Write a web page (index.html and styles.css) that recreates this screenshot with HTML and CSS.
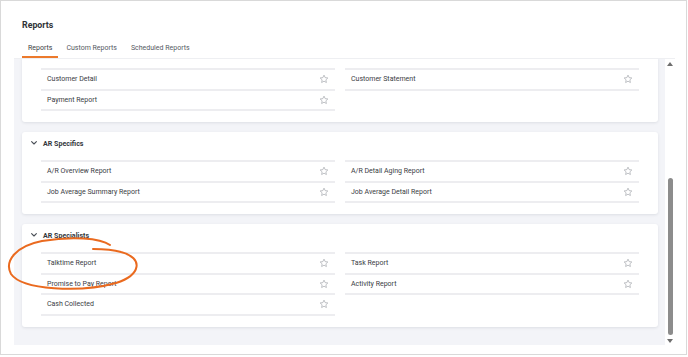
FILE: index.html
```html
<!DOCTYPE html>
<html lang="en">
<head>
<meta charset="utf-8">
<title>Reports</title>
<link rel="stylesheet" href="styles.css">
</head>
<body>
<div class="frame">
  <h1 class="title">Reports</h1>
  <nav class="tabs">
    <a class="tab active">Reports</a>
    <a class="tab">Custom Reports</a>
    <a class="tab">Scheduled Reports</a>
  </nav>
  <div class="viewport">
    <div class="pane">
      <div class="cards scrolled">
        <section class="card cut">
          <div class="list">
            <div class="col">
              <div class="row"><span>Customer Detail</span><svg class="star" viewBox="0 0 24 24"><path d="M12 2.8l2.8 5.9 6.4.8-4.7 4.5 1.2 6.4L12 17.3l-5.7 3.1 1.2-6.4L2.8 9.5l6.4-.8z"/></svg></div>
              <div class="row"><span>Payment Report</span><svg class="star" viewBox="0 0 24 24"><path d="M12 2.8l2.8 5.9 6.4.8-4.7 4.5 1.2 6.4L12 17.3l-5.7 3.1 1.2-6.4L2.8 9.5l6.4-.8z"/></svg></div>
            </div>
            <div class="col">
              <div class="row"><span>Customer Statement</span><svg class="star" viewBox="0 0 24 24"><path d="M12 2.8l2.8 5.9 6.4.8-4.7 4.5 1.2 6.4L12 17.3l-5.7 3.1 1.2-6.4L2.8 9.5l6.4-.8z"/></svg></div>
            </div>
          </div>
        </section>
        <section class="card">
          <header class="card-head">
            <svg class="chev" viewBox="0 0 6 4"><polyline points="0.6,0.6 3,3 5.4,0.6"/></svg>
            <span>AR Specifics</span>
          </header>
          <div class="list">
            <div class="col">
              <div class="row"><span>A/R Overview Report</span><svg class="star" viewBox="0 0 24 24"><path d="M12 2.8l2.8 5.9 6.4.8-4.7 4.5 1.2 6.4L12 17.3l-5.7 3.1 1.2-6.4L2.8 9.5l6.4-.8z"/></svg></div>
              <div class="row"><span>Job Average Summary Report</span><svg class="star" viewBox="0 0 24 24"><path d="M12 2.8l2.8 5.9 6.4.8-4.7 4.5 1.2 6.4L12 17.3l-5.7 3.1 1.2-6.4L2.8 9.5l6.4-.8z"/></svg></div>
            </div>
            <div class="col">
              <div class="row"><span>A/R Detail Aging Report</span><svg class="star" viewBox="0 0 24 24"><path d="M12 2.8l2.8 5.9 6.4.8-4.7 4.5 1.2 6.4L12 17.3l-5.7 3.1 1.2-6.4L2.8 9.5l6.4-.8z"/></svg></div>
              <div class="row"><span>Job Average Detail Report</span><svg class="star" viewBox="0 0 24 24"><path d="M12 2.8l2.8 5.9 6.4.8-4.7 4.5 1.2 6.4L12 17.3l-5.7 3.1 1.2-6.4L2.8 9.5l6.4-.8z"/></svg></div>
            </div>
          </div>
        </section>
        <section class="card">
          <header class="card-head">
            <svg class="chev" viewBox="0 0 6 4"><polyline points="0.6,0.6 3,3 5.4,0.6"/></svg>
            <span>AR Specialists</span>
          </header>
          <div class="list">
            <div class="col">
              <div class="row"><span>Talktime Report</span><svg class="star" viewBox="0 0 24 24"><path d="M12 2.8l2.8 5.9 6.4.8-4.7 4.5 1.2 6.4L12 17.3l-5.7 3.1 1.2-6.4L2.8 9.5l6.4-.8z"/></svg></div>
              <div class="row"><span>Promise to Pay Report</span><svg class="star" viewBox="0 0 24 24"><path d="M12 2.8l2.8 5.9 6.4.8-4.7 4.5 1.2 6.4L12 17.3l-5.7 3.1 1.2-6.4L2.8 9.5l6.4-.8z"/></svg></div>
              <div class="row"><span>Cash Collected</span><svg class="star" viewBox="0 0 24 24"><path d="M12 2.8l2.8 5.9 6.4.8-4.7 4.5 1.2 6.4L12 17.3l-5.7 3.1 1.2-6.4L2.8 9.5l6.4-.8z"/></svg></div>
            </div>
            <div class="col">
              <div class="row"><span>Task Report</span><svg class="star" viewBox="0 0 24 24"><path d="M12 2.8l2.8 5.9 6.4.8-4.7 4.5 1.2 6.4L12 17.3l-5.7 3.1 1.2-6.4L2.8 9.5l6.4-.8z"/></svg></div>
              <div class="row"><span>Activity Report</span><svg class="star" viewBox="0 0 24 24"><path d="M12 2.8l2.8 5.9 6.4.8-4.7 4.5 1.2 6.4L12 17.3l-5.7 3.1 1.2-6.4L2.8 9.5l6.4-.8z"/></svg></div>
            </div>
          </div>
        </section>
      </div>
    </div>
    <div class="scrollbar">
      <span class="arrow up"></span>
      <span class="track"><span class="thumb"></span></span>
      <span class="arrow down"></span>
    </div>
  </div>
  <svg class="annotation" viewBox="0 0 688 357">
    <path d="M110 245 C 100 238, 72 236, 42 241 C 16 246, 4 261, 11 274 C 22 290, 80 293, 116 283 C 141 275, 144 258, 121 252 C 111 249, 101 249, 93 249"/>
  </svg>
</div>
</body>
</html>
```
FILE: styles.css
```css
* { box-sizing: border-box; }
html, body { margin: 0; padding: 0; background: #fff; }
body { font-family: "Roboto", "Liberation Sans", sans-serif; color: #3a3d44; }

.frame {
  position: relative;
  width: 687px;
  height: 355px;
  border: 1px solid #d9d9d9;
  padding: 18px 11px 0 13px;
  display: flex;
  flex-direction: column;
}

.title {
  margin: 0 0 0 8px;
  font-size: 8.8px;
  line-height: 12px;
  font-weight: 700;
  color: #2f3237;
}

.tabs {
  display: flex;
  gap: 2px;
  margin: 8px 0 0 0;
  padding-left: 8px;
  border-bottom: 1px solid #eeeff2;
}
.tab {
  padding: 4px 6px 3px;
  line-height: 10px;
  font-size: 7px;
  color: #555a63;
  border-bottom: 2px solid transparent;
}
.tab.active { color: #3a3e45; border-bottom-color: #ec7a2c; }

.viewport {
  display: flex;
  height: 286px;
  width: 661px;
}
.pane {
  flex: 1;
  background: #f3f4f8;
  overflow: hidden;
  padding: 0 7px 16px 8px;
}
.cards {
  display: flex;
  flex-direction: column;
  gap: 10px;
}
.cards.scrolled { margin-top: -1px; }

.card {
  background: #fff;
  border-radius: 3px;
  box-shadow: 0 1px 3px rgba(30, 40, 60, 0.10);
  padding: 0 19px 11px;
}
.card.cut { padding-top: 10px; border-radius: 0 0 3px 3px; }
.card.cut .list { margin-top: 0; }
.card-head {
  height: 22px;
  margin-left: -10px;
  display: flex;
  align-items: center;
  gap: 6px;
  font-size: 7.1px;
  font-weight: 700;
  color: #33363c;
}
.chev {
  width: 6px;
  height: 4px;
  fill: none;
  stroke: #4a4f57;
  stroke-width: 1.1;
  stroke-linecap: round;
  stroke-linejoin: round;
}

.list {
  margin-top: 6px;
  display: grid;
  grid-template-columns: 1fr 1fr;
  column-gap: 10px;
  align-items: start;
}
.col { border-top: 2px solid #ededf0; }
.row {
  height: 20.5px;
  padding: 0 6px;
  display: flex;
  align-items: center;
  justify-content: space-between;
  border-bottom: 2px solid #ededf0;
  font-size: 7px;
  color: #3a3d44;
}
.star {
  width: 10px;
  height: 10px;
  fill: none;
  stroke: #9a9da3;
  stroke-width: 1.5;
  stroke-linejoin: round;
}

.scrollbar {
  width: 10px;
  background: #fff;
  display: flex;
  flex-direction: column;
  align-items: center;
  padding: 3px 0 2px;
}
.arrow {
  flex: none;
  width: 0;
  height: 0;
  border-left: 3px solid transparent;
  border-right: 3px solid transparent;
}
.arrow.up { border-bottom: 4px solid #6e6e6e; }
.arrow.down { border-top: 4px solid #6e6e6e; }
.track {
  flex: 1;
  display: flex;
  flex-direction: column;
  justify-content: flex-end;
  padding: 0 0 4px;
}
.thumb {
  display: block;
  width: 5px;
  height: 157px;
  border-radius: 3px;
  background: #8c8c8c;
}

.annotation {
  position: absolute;
  left: -1px;
  top: -1px;
  width: 688px;
  height: 357px;
  pointer-events: none;
  fill: none;
  stroke: #ea6a1f;
  stroke-width: 2;
  stroke-linecap: round;
}
```
